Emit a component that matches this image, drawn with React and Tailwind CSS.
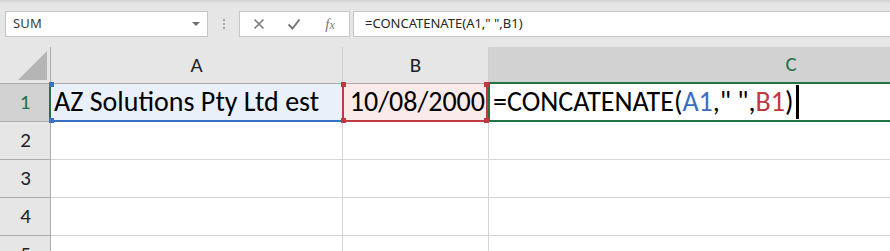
import React from "react";

const cellFont = { fontFamily: '"Carlito", "Lato", "Liberation Sans", sans-serif' };

const Handle = ({ className }) => (
  <div className={"absolute w-[5px] h-[5px] " + className} />
);

const RowHead = ({ n, active }) => (
  <div
    className={
      active
        ? "w-[51px] shrink-0 flex items-center justify-center bg-[#d2d2d2] text-[#217346] border-r-2 border-[#217346] border-b border-b-[#ababab]"
        : "w-[51px] shrink-0 flex items-center justify-center bg-[#e6e6e6] text-[#1f1f1f] border-r border-[#ababab] border-b border-b-[#ababab]"
    }
  >
    <span className="text-[21px] leading-none pl-[1px]">{n}</span>
  </div>
);

const EmptyRow = ({ n }) => (
  <div className="flex h-[38px] shrink-0">
    <RowHead n={n} />
    <div className="w-[292px] shrink-0 border-r border-b border-[#d4d4d4]" />
    <div className="w-[146px] shrink-0 border-r border-b border-[#d4d4d4]" />
    <div className="w-[604px] shrink-0 border-b border-[#d4d4d4]" />
  </div>
);

export default function App() {
  return (
    <div className="w-[890px] h-[251px] overflow-hidden bg-white flex flex-col" style={cellFont}>
      {/* formula bar */}
      <div className="h-[47px] shrink-0 bg-[#e6e6e6] relative">
        <div className="h-[4px] bg-gradient-to-b from-[#d2d2d2] to-[#e6e6e6]" />
        <div
          className="flex items-center pl-[5px] pt-[7px] gap-0"
          style={{ fontFamily: '"Noto Sans", "Open Sans", sans-serif' }}
        >
          <div className="w-[203px] h-[26px] bg-white border border-[#c6c6c6] flex items-center justify-between pl-[7px] pr-[6px]">
            <span className="text-[13px] text-[#3c3c3c] tracking-[0.2px]">SUM</span>
            <svg width="10" height="6" viewBox="0 0 10 6">
              <path d="M1 1h8L5 5z" fill="#6e6e6e" />
            </svg>
          </div>
          <div className="w-[31px] h-[26px] flex flex-col items-center justify-center gap-[2px]">
            <span className="w-[2px] h-[2px] bg-[#a3a3a3]" />
            <span className="w-[2px] h-[2px] bg-[#a3a3a3]" />
            <span className="w-[2px] h-[2px] bg-[#a3a3a3]" />
          </div>
          <div className="w-[111px] h-[26px] bg-white border border-[#c6c6c6] flex items-center">
            <div className="w-[36px] flex justify-center pl-[2px]">
              <svg width="12" height="12" viewBox="0 0 12 12">
                <path d="M1.5 1.5l9 9M10.5 1.5l-9 9" stroke="#767676" strokeWidth="1.5" />
              </svg>
            </div>
            <div className="w-[36px] flex justify-center">
              <svg width="14" height="12" viewBox="0 0 14 12">
                <path d="M1.5 6.5l4 4 7-9" stroke="#767676" strokeWidth="2" fill="none" />
              </svg>
            </div>
            <div className="w-[36px] flex justify-center">
              <span
                className="text-[15px] italic text-[#7a7a7a] leading-none"
                style={{ fontFamily: '"Liberation Serif", "DejaVu Serif", serif' }}
              >
                f<span className="text-[12px]">x</span>
              </span>
            </div>
          </div>
          <div className="ml-[3px] flex-1 h-[26px] bg-white border border-[#c6c6c6] border-r-0 flex items-center pl-[11px]">
            <span className="text-[13px] text-[#262626]">=CONCATENATE(A1," ",B1)</span>
          </div>
        </div>
      </div>

      {/* column headers */}
      <div className="flex h-[37px] shrink-0">
        <div className="w-[51px] shrink-0 bg-[#e6e6e6] border-r border-b border-[#ababab] relative">
          <svg className="absolute right-[3px] bottom-[3px]" width="29" height="29" viewBox="0 0 29 29">
            <path d="M29 0V29H0z" fill="#b5b5b5" />
          </svg>
        </div>
        <div className="w-[292px] shrink-0 bg-[#e6e6e6] border-r border-[#cfcfcf] border-b border-b-[#ababab] flex items-center justify-center">
          <span className="text-[21px] text-[#1f1f1f] leading-none">A</span>
        </div>
        <div className="w-[146px] shrink-0 bg-[#e6e6e6] border-r border-[#cfcfcf] border-b border-b-[#ababab] flex items-center justify-center">
          <span className="text-[21px] text-[#1f1f1f] leading-none">B</span>
        </div>
        <div className="w-[604px] shrink-0 bg-[#d2d2d2] border-b-2 border-[#217346] flex items-center justify-center">
          <span className="text-[21px] text-[#217346] leading-none">C</span>
        </div>
      </div>

      {/* row 1 */}
      <div className="flex h-[38px] shrink-0">
        <RowHead n={1} active />
        <div className="w-[291px] shrink-0 bg-[#e9f0fa] border-b-2 border-[#3b6fc4] relative flex items-center pl-[3px]">
          <Handle className="bg-[#3b6fc4] -left-[2px] -top-[2px]" />
          <Handle className="bg-[#3b6fc4] -left-[2px] -bottom-[3px]" />
          <span className="text-[28px] text-black leading-none whitespace-nowrap">AZ Solutions Pty Ltd est</span>
        </div>
        <div className="w-[146px] shrink-0 bg-[#fbeaea] border-x-2 border-b-2 border-[#c0393f] relative flex items-center justify-end pr-[1px]">
          <Handle className="bg-[#c0393f] -left-[3px] -top-[2px]" />
          <Handle className="bg-[#c0393f] -right-[3px] -top-[2px]" />
          <Handle className="bg-[#c0393f] -left-[3px] -bottom-[3px]" />
          <Handle className="bg-[#c0393f] -right-[3px] -bottom-[3px]" />
          <span className="text-[28px] text-black leading-none whitespace-nowrap">10/08/2000</span>
        </div>
        <div className="w-[604px] shrink-0 border-l-2 border-b-2 border-[#217346] flex items-center pl-[3px]">
          <span className="text-[28px] text-black leading-none whitespace-nowrap">
            =CONCATENATE(<span className="text-[#3b6fc4]">A1</span>," ",<span className="text-[#c0393f]">B1</span>)
          </span>
          <span className="w-[3px] h-[34px] bg-black ml-[2px]" />
        </div>
      </div>

      <EmptyRow n={2} />
      <EmptyRow n={3} />
      <EmptyRow n={4} />
      <EmptyRow n={5} />
    </div>
  );
}
